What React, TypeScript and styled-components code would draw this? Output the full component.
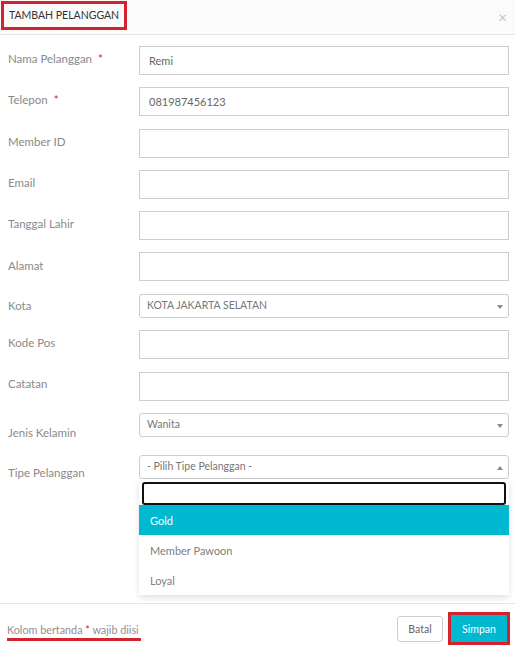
import React from "react";
import styled, { createGlobalStyle } from "styled-components";

const Global = createGlobalStyle`
  html, body { margin: 0; padding: 0; background: #fff; }
  body { font-family: Lato, "Open Sans", Arial, sans-serif; }
  * { box-sizing: border-box; }
`;

const Modal = styled.div`
  width: 515px;
  height: 649px;
  display: flex;
  flex-direction: column;
  background: #fff;
  position: relative;
`;

const Header = styled.div`
  height: 35px;
  flex: none;
  display: flex;
  align-items: center;
  justify-content: space-between;
  padding: 0 8px 0 8px;
  background: #fbfbfb;
  border-bottom: 1px solid #e6e6e6;
`;

const TitleBox = styled.div`
  margin-left: -7px;
  margin-top: -4px;
  padding: 0 5px 0 5px;
  height: 29px;
  display: flex;
  align-items: center;
  border: 3px solid #d2232f;
  white-space: nowrap;
`;

const Title = styled.span`
  font-size: 10.5px;
  color: #333;
  white-space: nowrap;
`;

const Close = styled.span`
  font-size: 15px;
  color: #c4c4c4;
  line-height: 1;
`;

const Body = styled.div`
  flex: 1;
  padding: 0 6px 0 8px;
  position: relative;
`;

const Row = styled.div<{ $mt: number }>`
  display: flex;
  align-items: flex-start;
  margin-top: ${(p) => p.$mt}px;
`;

const Label = styled.div<{ $pt: number }>`
  width: 131px;
  flex: none;
  font-size: 11.5px;
  color: #8a8a8a;
  padding-top: ${(p) => p.$pt}px;
  line-height: 16px;
`;

const Req = styled.span`
  color: #d2232f;
  margin-left: 6px;
`;

const Input = styled.div`
  flex: 1;
  height: 29px;
  border: 1px solid #cdcdcd;
  display: flex;
  align-items: center;
  padding-left: 9px;
  font-size: 11px;
  color: #666;
`;

const SelectBox = styled.div`
  flex: 1;
  height: 24px;
  border: 1px solid #cdcdcd;
  border-radius: 3px;
  display: flex;
  align-items: center;
  justify-content: space-between;
  padding: 0 5px 2px 7px;
  font-size: 10.5px;
  color: #777;
  position: relative;
`;

const Arrow = styled.span<{ $up?: boolean }>`
  width: 0;
  height: 0;
  border-left: 3px solid transparent;
  border-right: 3px solid transparent;
  ${(p) =>
    p.$up
      ? "border-bottom: 4px solid #8a8a8a; margin-top: 3px;"
      : "border-top: 4px solid #8a8a8a; margin-top: 3px;"}
`;

const Dropdown = styled.div`
  position: absolute;
  left: -1px;
  right: -1px;
  top: 23px;
  background: #fff;
  box-shadow: 0 3px 6px rgba(0, 0, 0, 0.12);
  border-radius: 0 0 4px 4px;
  padding-top: 3px;
  z-index: 2;
`;

const Search = styled.div`
  height: 23px;
  margin: 0 3px;
  border: 2px solid #111;
  border-radius: 3px;
`;

const Option = styled.div<{ $active?: boolean }>`
  height: 30px;
  display: flex;
  align-items: center;
  padding-left: 11px;
  font-size: 11px;
  color: ${(p) => (p.$active ? "#fff" : "#808080")};
  background: ${(p) => (p.$active ? "#00b9d1" : "#fff")};
`;

const Footer = styled.div`
  height: 46px;
  flex: none;
  border-top: 1px solid #e6e6e6;
  display: flex;
  align-items: center;
  justify-content: space-between;
  padding: 0 5px 0 8px;
`;

const Note = styled.span`
  font-size: 10.8px;
  color: #8f8f8f;
  padding-bottom: 1px;
  border-bottom: 3px solid #d2232f;
  margin-left: -1px;
  padding-right: 2px;
  margin-top: 9px;
  line-height: 15px;
`;

const NoteStar = styled.span`
  color: #d2232f;
`;

const Buttons = styled.div`
  display: flex;
  align-items: center;
  gap: 5px;
  margin-top: 4px;
`;

const Btn = styled.div`
  height: 26px;
  width: 46px;
  display: flex;
  align-items: center;
  justify-content: center;
  font-size: 10.5px;
  border-radius: 3px;
  border: 1px solid #cdcdcd;
  background: #fff;
  color: #666;
`;

const PrimaryWrap = styled.div`
  border: 3px solid #d2232f;
`;

const Primary = styled.div`
  height: 27px;
  width: 56px;
  display: flex;
  align-items: center;
  justify-content: center;
  font-size: 10.5px;
  color: #fff;
  background: #00b9d1;
`;

type F = { label: string; req?: boolean; value?: string; mt: number; pt: number };

const inputs: F[] = [
  { label: "Nama Pelanggan", req: true, value: "Remi", mt: 11, pt: 5 },
  { label: "Telepon", req: true, value: "081987456123", mt: 12, pt: 5 },
  { label: "Member ID", mt: 13, pt: 5 },
  { label: "Email", mt: 12, pt: 5 },
  { label: "Tanggal Lahir", mt: 12, pt: 5 },
  { label: "Alamat", mt: 12, pt: 6 },
];

export default function App() {
  return (
    <>
      <Global />
      <Modal>
        <Header>
          <TitleBox>
            <Title>TAMBAH PELANGGAN</Title>
          </TitleBox>
          <Close>×</Close>
        </Header>
        <Body>
          {inputs.map((f) => (
            <Row key={f.label} $mt={f.mt}>
              <Label $pt={f.pt}>
                {f.label}
                {f.req && <Req>*</Req>}
              </Label>
              <Input>{f.value}</Input>
            </Row>
          ))}
          <Row $mt={13}>
            <Label $pt={4}>Kota</Label>
            <SelectBox>
              KOTA JAKARTA SELATAN
              <Arrow />
            </SelectBox>
          </Row>
          <Row $mt={12}>
            <Label $pt={5}>Kode Pos</Label>
            <Input />
          </Row>
          <Row $mt={13}>
            <Label $pt={4}>Catatan</Label>
            <Input />
          </Row>
          <Row $mt={12}>
            <Label $pt={12}>Jenis Kelamin</Label>
            <SelectBox>
              Wanita
              <Arrow />
            </SelectBox>
          </Row>
          <Row $mt={14}>
            <Label $pt={10}>Tipe Pelanggan</Label>
            <SelectBox>
              - Pilih Tipe Pelanggan -
              <Arrow $up />
              <Dropdown>
                <Search />
                <Option $active>Gold</Option>
                <Option>Member Pawoon</Option>
                <Option>Loyal</Option>
              </Dropdown>
            </SelectBox>
          </Row>
        </Body>
        <Footer>
          <Note>
            Kolom bertanda <NoteStar>*</NoteStar> wajib diisi
          </Note>
          <Buttons>
            <Btn>Batal</Btn>
            <PrimaryWrap>
              <Primary>Simpan</Primary>
            </PrimaryWrap>
          </Buttons>
        </Footer>
      </Modal>
    </>
  );
}
